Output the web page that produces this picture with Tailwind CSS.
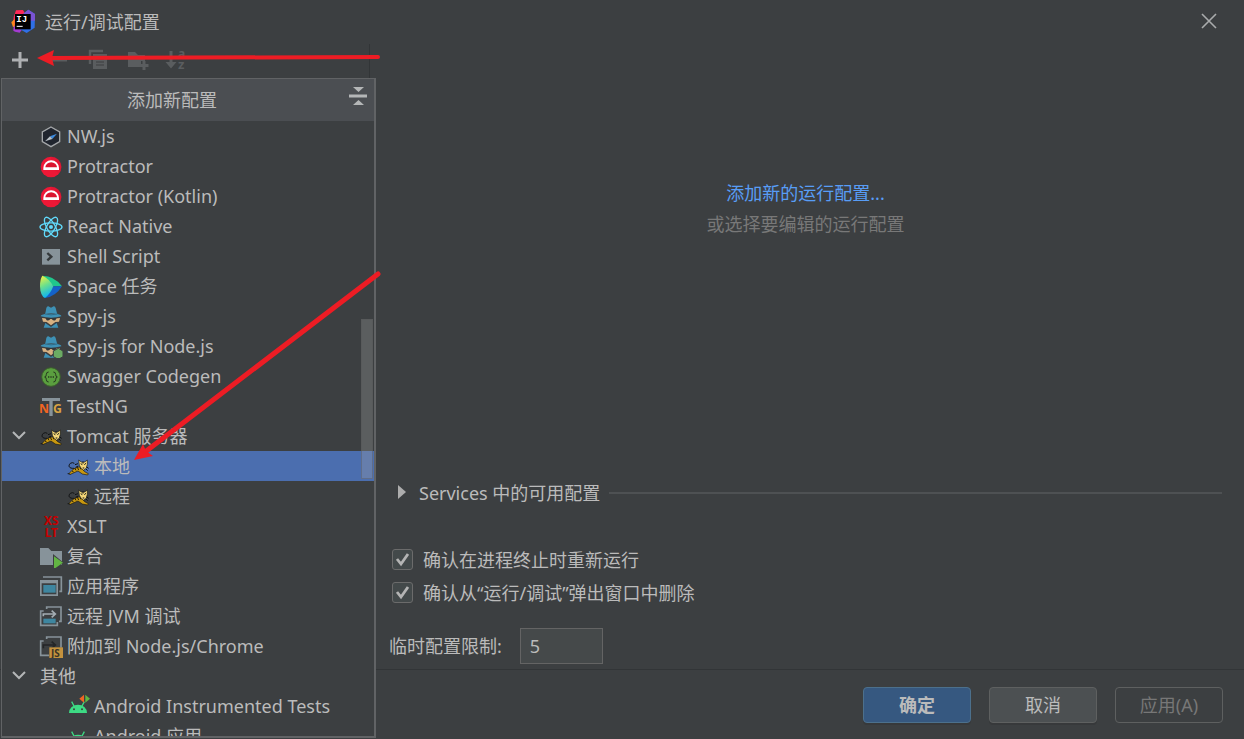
<!DOCTYPE html>
<html lang="zh-CN">
<head>
  <meta charset="UTF-8">
  <meta name="viewport" content="width=device-width, initial-scale=1.0">
  <title>运行/调试配置</title>
  <script src="https://cdn.jsdelivr.net/npm/@tailwindcss/browser@4"></script>
  <style>
    body, button, input{font-family:"Noto Sans","Noto Sans CJK SC",sans-serif;}
  </style>
</head>
<body class="relative h-screen overflow-hidden flex flex-col bg-[#3c3f41] text-[#bbbbbb] text-lg leading-6">

  <!-- 共用图标 -->
  <svg class="hidden">
    <symbol id="i-protractor" viewBox="0 0 72 72">
      <circle cx="36" cy="39" r="31" fill="#ee1836"/>
      <path d="M36 8a31 31 0 0 1 24 51L36 39z" fill="#d51530" opacity=".35"/>
      <path d="M13 48V42a23 23 0 0 1 47 0v6z" fill="#fff"/>
      <path d="M19 40a17 15 0 0 1 35 0z" fill="#d9152f"/>
    </symbol>
    <symbol id="i-tomcat" viewBox="0 0 72 72">
      <path d="M24 43C8 44 6 35 13 28q6-4 12 0M14 60l-9-1" fill="none" stroke="#111314" stroke-width="3"/>
      <path d="M9 59c6-6 11-15 23-18 8-2 12-5 20-1 3 6-2 10 4 13l11 6-2 4-16-3-13-9-14 6-9 4z" fill="#c9980f" stroke="#1b1a12" stroke-width="2"/>
      <path d="M26 42l4 7M34 40l4 8M18 51l5 3M42 40l3 6" stroke="#2b2108" stroke-width="3"/>
      <path d="M38 18l8 6h10l8-6v13l-3 11-8 7-7-5-6-10z" fill="#f3d678" stroke="#111314" stroke-width="2"/>
      <path d="M44 29l5 3M60 28l-5 4M50 42h5M51 23v6" stroke="#111314" stroke-width="3"/>
      <path d="M36 29l-9 3M37 36l-8 4M62 39l6 4M60 45l5 5" stroke="#111314" stroke-width="3"/>
    </symbol>
    <symbol id="i-spy" viewBox="0 0 72 72">
      <path d="M19 28l3-16q2-6 6-5l8 4 8-4q4-1 6 5l4 16z" fill="#3e91b5"/>
      <path d="M19 26q17 6 35 0l1 4q12 2 12 7-30 8-62 0 0-5 13-7z" fill="#3e91b5"/>
      <path d="M18 30q18 5 37 0" fill="none" stroke="#2b586c" stroke-width="2"/>
      <path d="M9 42q27 5 54 0l-3 11-11 1-13 10-13-10-11-1z" fill="#d8b181"/>
      <path d="M19 42h34l-4 7q-6 2-11-4h-4q-5 6-11 4z" fill="#343739"/>
      <path d="M14 71l5-14 17 12 17-12 5 14z" fill="#3e91b5"/>
    </symbol>
    <symbol id="i-android" viewBox="0 0 72 72">
      <path d="M9 57a27 25 0 0 1 54 0z" fill="#3ddb84"/>
      <path d="M17 23l7 13M55 23l-7 13" stroke="#3ddb84" stroke-width="4"/>
      <circle cx="24" cy="46" r="3" fill="#3c3f41"/><circle cx="48" cy="46" r="3" fill="#3c3f41"/>
    </symbol>
    <symbol id="i-chevron" viewBox="0 0 16 16">
      <path d="M2 4l6 6 6-6" fill="none" stroke="#b4b6b7" stroke-width="2"/>
    </symbol>
  </svg>

  <!-- 标题栏 -->
  <header class="h-11 shrink-0 flex items-center pl-[11px] pr-[23px]">
    <svg class="w-6 h-6 mb-0.5" viewBox="0 0 72 72">
      <path d="M8 24L15 4l21-1 8 14-26 36-12-5z" fill="#fe2857"/>
      <path d="M1 40l10-10v24H6z" fill="#fc8a1c"/>
      <path d="M8 52h20l4 11-6 8-14-3-5-3z" fill="#a33bd0"/>
      <path d="M36 15L52 2l20 13-1 41-24 16-20-11z" fill="#2f6fe6"/>
      <path d="M36 15L52 2l20 13v20H38z" fill="#7a53d3"/>
      <rect x="12" y="15" width="47" height="46" fill="#000"/>
      <text x="16" y="40" font-family="Liberation Mono" font-weight="bold" font-size="27" fill="#fff">IJ</text>
      <path d="M17 52h18" stroke="#fff" stroke-width="3"/>
    </svg>
    <h1 class="ml-2.5 flex-1">运行/调试配置</h1>
    <button type="button" aria-label="关闭" class="mb-0.5">
      <svg class="w-6 h-6" viewBox="0 0 24 24"><path d="M5 5l14 14M19 5L5 19" stroke="#a9abac" stroke-width="1.6"/></svg>
    </button>
  </header>

  <div class="flex-1 min-h-0 flex">
    <!-- 左侧：工具栏 -->
    <aside class="w-[370px] shrink-0 border-r border-[#323537]">
      <div class="flex items-center gap-[15px] pt-1 pl-2">
        <button type="button" aria-label="添加" class="w-6 h-6">
          <svg viewBox="0 0 24 24"><path d="M12 4v16M4 12h16" stroke="#afb1b3" stroke-width="3"/></svg>
        </button>
        <button type="button" aria-label="移除" disabled class="w-6 h-6">
          <svg viewBox="0 0 24 24"><path d="M4 12h16" stroke="#5a5d5f" stroke-width="3"/></svg>
        </button>
        <button type="button" aria-label="复制" disabled class="w-6 h-6">
          <svg viewBox="0 0 24 24"><path d="M4 16V3h13" fill="none" stroke="#5a5d5f" stroke-width="2.400"/><path d="M7 6h14v15H7z" fill="#5a5d5f"/><path d="M10 11h8M10 14h8M10 17h8" stroke="#3c3f41" stroke-width="1"/></svg>
        </button>
        <button type="button" aria-label="新建文件夹" disabled class="w-6 h-6">
          <svg viewBox="0 0 24 24"><path d="M3 4h7l3 3h7v6h-4v6H3z" fill="#5a5d5f"/><path d="M19 13v9M14.500 17.500h9" stroke="#5a5d5f" stroke-width="3"/></svg>
        </button>
        <button type="button" aria-label="排序" disabled class="w-6 h-6">
          <svg viewBox="0 0 24 24" fill="#5a5d5f" overflow="visible"><path d="M5.500 3h3v11h4L7 20.500 1.500 14h4z"/><text x="14" y="10" font-family="Noto Sans" font-weight="bold" font-size="12">a</text><text x="14" y="21" font-family="Noto Sans" font-weight="bold" font-size="13">z</text></svg>
        </button>
      </div>
    </aside>

    <!-- 右侧：内容 -->
    <main class="flex-1 flex flex-col pl-[19px] pr-[22px]">
      <div class="flex-1 pt-[137px] flex flex-col items-center gap-[7px]">
        <a href="#" class="text-[#589df6]">添加新的运行配置...</a>
        <p class="text-[#787878]">或选择要编辑的运行配置</p>
      </div>

      <button type="button" class="flex items-center text-left pl-[9px]">
        <svg class="w-2 h-4 mb-0.5" viewBox="0 0 8 16"><path d="M0 1l8 7-8 7z" fill="#adadad"/></svg>
        <span class="ml-[13px]">Services 中的可用配置</span>
        <span class="ml-[9px] flex-1 h-0.5 bg-[#4e5153]"></span>
      </button>

      <div class="mt-[43px] flex flex-col gap-[9px] pl-[3px]">
        <label class="flex items-center gap-[10px]">
          <span class="relative w-[21px] h-[21px] mb-0.5">
            <input type="checkbox" checked class="block appearance-none w-[21px] h-[21px] rounded-[3px] border border-[#6b6b6b] bg-[#43494a]">
            <svg class="absolute inset-0 pointer-events-none" viewBox="0 0 21 21"><path d="M5 10l4 5 7-10" fill="none" stroke="#b4b4b4" stroke-width="2.800"/></svg>
          </span>
          确认在进程终止时重新运行
        </label>
        <label class="flex items-center gap-[10px]">
          <span class="relative w-[21px] h-[21px] mb-0.5">
            <input type="checkbox" checked class="block appearance-none w-[21px] h-[21px] rounded-[3px] border border-[#6b6b6b] bg-[#43494a]">
            <svg class="absolute inset-0 pointer-events-none" viewBox="0 0 21 21"><path d="M5 10l4 5 7-10" fill="none" stroke="#b4b4b4" stroke-width="2.800"/></svg>
          </span>
          确认从“运行/调试”弹出窗口中删除
        </label>
      </div>

      <div class="mt-[23px] mb-[5px] flex items-center">
        <label for="limit">临时配置限制:</label>
        <input id="limit" type="text" value="5" class="ml-[18px] w-[83px] h-9 px-[9px] border border-[#646464] bg-[#45494a]">
      </div>
    </main>
  </div>

  <!-- 底部按钮 -->
  <footer class="shrink-0 flex justify-end gap-[18px] pt-[17px] pb-4 pr-[21px] border-t border-[#323537]">
    <button type="button" class="w-[108px] h-9 rounded-[4px] border border-[#4c708c] bg-[#365880] font-bold shadow-[0_2px_0_#37393b]">确定</button>
    <button type="button" class="w-[108px] h-9 rounded-[4px] border border-[#5e6060] bg-[#4c5052] shadow-[0_2px_0_#37393b]">取消</button>
    <button type="button" disabled class="w-[108px] h-9 rounded-[4px] border border-[#5e6060] text-[#777777]">应用(A)</button>
  </footer>

  <!-- 弹出菜单：添加新配置 -->
  <section class="absolute left-px top-[78px] bottom-px w-[375px] flex flex-col overflow-hidden border-t border-l border-r-2 border-b-2 border-[#616365] bg-[#3c3f41]">
    <div class="h-[42px] shrink-0 flex items-center bg-[#4b4e52] pr-1">
      <h2 class="flex-1 pr-1 text-center">添加新配置</h2>
      <button type="button" aria-label="全部折叠" class="w-6 h-6 mb-2">
        <svg viewBox="0 0 24 24" fill="#b4b6b7"><path d="M7 3h11l-5.500 5zM3 10.500h18v3H3zM7 21h11l-5.500-5z"/></svg>
      </button>
    </div>
    <ul class="flex-1 min-h-0 overflow-hidden whitespace-nowrap">
      <li class="h-[30px] pl-[37px] flex items-center gap-1">
        <svg class="w-6 h-6" viewBox="0 0 72 72"><path d="M36 9l26 15v29L36 68 10 53V24z" fill="#20252e" stroke="#a4a7a9" stroke-width="4"/><path d="M54 29L40 45l-7-8z" fill="#3d8be0"/><path d="M18 52l15-15 7 8z" fill="#b9c0c6"/></svg>
        NW.js
      </li>
      <li class="h-[30px] pl-[37px] flex items-center gap-1">
        <svg class="w-6 h-6"><use href="#i-protractor"/></svg>
        Protractor
      </li>
      <li class="h-[30px] pl-[37px] flex items-center gap-1">
        <svg class="w-6 h-6"><use href="#i-protractor"/></svg>
        Protractor (Kotlin)
      </li>
      <li class="h-[30px] pl-[37px] flex items-center gap-1">
        <svg class="w-6 h-6" viewBox="0 0 72 72" fill="none" stroke="#61dafb" stroke-width="4"><ellipse cx="36" cy="39" rx="33" ry="12.500"/><ellipse cx="36" cy="39" rx="33" ry="12.500" transform="rotate(60 36 39)"/><ellipse cx="36" cy="39" rx="33" ry="12.500" transform="rotate(120 36 39)"/><circle cx="36" cy="39" r="6" fill="#61dafb" stroke="none"/></svg>
        React Native
      </li>
      <li class="h-[30px] pl-[37px] flex items-center gap-1">
        <svg class="w-6 h-6" viewBox="0 0 72 72"><path d="M9 15h54v47H9z" fill="#87939a"/><path d="M25 27l12 11-12 11" fill="none" stroke="#35393b" stroke-width="7"/></svg>
        Shell Script
      </li>
      <li class="h-[30px] pl-[37px] flex items-center gap-1">
        <svg class="w-6 h-6" viewBox="0 0 72 72">
          <defs><linearGradient id="sp" x1="0" y1="0" x2="0.300" y2="1"><stop offset="0" stop-color="#fff33a"/><stop offset=".5" stop-color="#6be08c"/><stop offset="1" stop-color="#0fb5f0"/></linearGradient></defs>
          <path d="M10 5q36 0 59 32H43z" fill="#20c78c"/>
          <path d="M69 37Q50 68 18 72l25-35z" fill="#1462c8"/>
          <path d="M10 5q20 8 33 32Q34 60 18 72 4 66 3 36 3 16 10 5z" fill="url(#sp)"/>
        </svg>
        Space 任务
      </li>
      <li class="h-[30px] pl-[37px] flex items-center gap-1">
        <svg class="w-6 h-6"><use href="#i-spy"/></svg>
        Spy-js
      </li>
      <li class="h-[30px] pl-[37px] flex items-center gap-1">
        <svg class="w-6 h-6" viewBox="0 0 72 72"><use href="#i-spy"/><path d="M58 43l14 8v17l-14 8-15-8V51z" fill="#6bab63" stroke="#3c3f41" stroke-width="3"/></svg>
        Spy-js for Node.js
      </li>
      <li class="h-[30px] pl-[37px] flex items-center gap-1">
        <svg class="w-6 h-6" viewBox="0 0 72 72"><circle cx="36" cy="39" r="28" fill="#5a9e3f" stroke="#3b5c2c" stroke-width="3"/><path d="M29 24q-7 0-7 7 0 8-5 8 5 0 5 8 0 7 7 7M43 24q7 0 7 7 0 8 5 8-5 0-5 8 0 7-7 7" fill="none" stroke="#27381f" stroke-width="3"/><path d="M27 39h19" stroke="#27381f" stroke-width="4" stroke-dasharray="4 3"/></svg>
        Swagger Codegen
      </li>
      <li class="h-[30px] pl-[37px] flex items-center gap-1">
        <svg class="w-6 h-6" viewBox="0 0 72 72"><path d="M9 12h54v9H41v45H31V21H9z" fill="#87939a"/><g font-family="Noto Sans" font-weight="bold" font-size="37"><text x="0" y="58" fill="#f26522">N</text><text x="42" y="58" fill="#d9a343">G</text></g></svg>
        TestNG
      </li>
      <li class="h-[30px] pl-[9px] flex items-center gap-1">
        <svg class="w-4 h-4 mr-2"><use href="#i-chevron"/></svg>
        <svg class="w-6 h-6"><use href="#i-tomcat"/></svg>
        Tomcat 服务器
      </li>
      <li class="h-[30px] pl-16 flex items-center gap-1 bg-[#4b6eaf]">
        <svg class="w-6 h-6"><use href="#i-tomcat"/></svg>
        本地
      </li>
      <li class="h-[30px] pl-16 flex items-center gap-1">
        <svg class="w-6 h-6"><use href="#i-tomcat"/></svg>
        远程
      </li>
      <li class="h-[30px] pl-[37px] flex items-center gap-1">
        <svg class="w-6 h-6" viewBox="0 0 72 72" overflow="visible"><g font-family="Noto Sans" font-weight="bold" font-size="36" fill="#c20000" text-anchor="middle"><text x="37" y="33">XS</text><text x="37" y="68">LT</text></g></svg>
        XSLT
      </li>
      <li class="h-[30px] pl-[37px] flex items-center gap-1">
        <svg class="w-6 h-6" viewBox="0 0 72 72"><path d="M3 12h25l9 9h32v42H3z" fill="#87939a"/><path d="M42 30l32 26-32 26z" fill="#3c3f41"/><path d="M45 37l27 19-27 19z" fill="#62b543"/></svg>
        复合
      </li>
      <li class="h-[30px] pl-[37px] flex items-center gap-1">
        <svg class="w-6 h-6" viewBox="0 0 72 72"><path d="M12 9h55v43h-6" fill="none" stroke="#87939a" stroke-width="5"/><path d="M3 18h54v48H3zM8 28v33h44V28z" fill="#87939a" fill-rule="evenodd"/><path d="M13 33h37v23H13z" fill="#3e86a0"/></svg>
        应用程序
      </li>
      <li class="h-[30px] pl-[37px] flex items-center gap-1">
        <svg class="w-6 h-6" viewBox="0 0 72 72"><path d="M23 15V9h43v43h-6M14 21H5v43h50V54" fill="none" stroke="#87939a" stroke-width="5"/><path d="M13 44h37v14H13z" fill="#3e86a0"/><path d="M13 37V30h33M38 20l11 10-11 10" fill="none" stroke="#a3adb3" stroke-width="5"/></svg>
        远程 JVM 调试
      </li>
      <li class="h-[30px] pl-[37px] flex items-center gap-1">
        <svg class="w-6 h-6" viewBox="0 0 72 72"><path d="M23 15V9h43v32M14 21H5v43h25" fill="none" stroke="#87939a" stroke-width="5"/><path d="M13 43V33h33M38 23l11 10-11 10" fill="none" stroke="#232527" stroke-width="5"/><path d="M31 40h41v34H31z" fill="#c4923e"/><text x="36" y="69" font-family="Noto Sans" font-weight="bold" font-size="30" fill="#3a3426">JS</text></svg>
        附加到 Node.js/Chrome
      </li>
      <li class="h-[30px] pl-[9px] flex items-center gap-[13px]">
        <svg class="w-4 h-4"><use href="#i-chevron"/></svg>
        其他
      </li>
      <li class="h-[30px] pl-16 flex items-center gap-1">
        <svg class="w-6 h-6" viewBox="0 0 72 72"><use href="#i-android"/><path d="M40 14L54 2v24z" fill="#f26522"/><path d="M72 14L58 2v24z" fill="#62b543"/></svg>
        Android Instrumented Tests
      </li>
      <li class="h-[30px] pl-16 flex items-center gap-1">
        <svg class="w-6 h-6"><use href="#i-android"/></svg>
        Android 应用
      </li>
    </ul>
    <!-- 滚动条滑块 -->
    <div class="absolute right-px top-60 w-3 h-40 bg-[#a6a6a6]/30 border border-[#555555]/40"></div>
  </section>

  <!-- 红色箭头标注 -->
  <svg class="absolute left-0 top-0 w-[400px] h-[480px] pointer-events-none" viewBox="0 0 400 480">
    <g stroke="#ed1c24" stroke-width="4" stroke-linecap="round">
      <path d="M50 58L378 57"/>
      <path d="M378 274L145 452" stroke-width="5"/>
    </g>
    <path d="M37 58l17-8-2 8 2 8z" fill="#ed1c24"/>
    <path d="M134 460l9-16 3 7 7 5z" fill="#ed1c24"/>
  </svg>

</body>
</html>
